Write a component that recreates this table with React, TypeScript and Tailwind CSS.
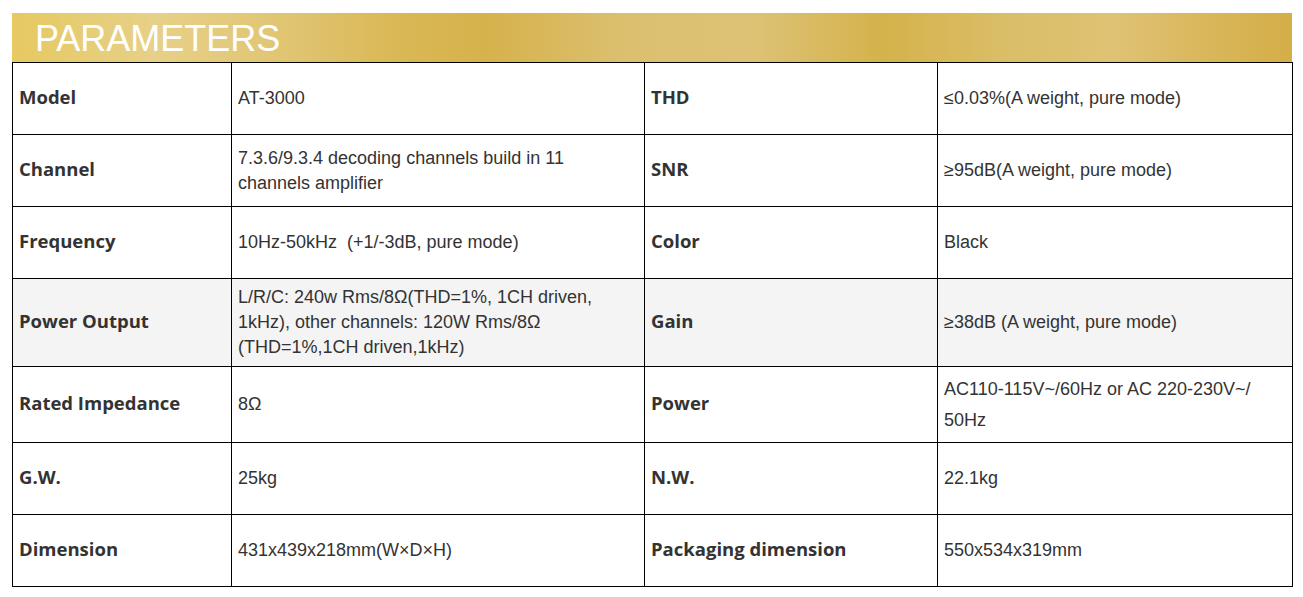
import React from "react";

interface Spec {
    label: string;
    value: React.ReactNode;
}

interface SpecRow {
    left: Spec;
    right: Spec;
    height: string;
    shaded?: boolean;
}

const rows: SpecRow[] = [
    {
        left: { label: "Model", value: "AT-3000" },
        right: { label: "THD", value: "≤0.03%(A weight, pure mode)" },
        height: "h-[72px]",
    },
    {
        left: {
            label: "Channel",
            value: "7.3.6/9.3.4 decoding channels build in 11 channels amplifier",
        },
        right: { label: "SNR", value: "≥95dB(A weight, pure mode)" },
        height: "h-[72px]",
    },
    {
        left: { label: "Frequency", value: "10Hz-50kHz\u00a0\u00a0(+1/-3dB, pure mode)" },
        right: { label: "Color", value: "Black" },
        height: "h-[72px]",
    },
    {
        left: {
            label: "Power Output",
            value: "L/R/C: 240w Rms/8Ω(THD=1%, 1CH driven, 1kHz), other channels: 120W Rms/8Ω (THD=1%,1CH driven,1kHz)",
        },
        right: { label: "Gain", value: "≥38dB (A weight, pure mode)" },
        height: "h-[88px]",
        shaded: true,
    },
    {
        left: { label: "Rated Impedance", value: "8Ω" },
        right: {
            label: "Power",
            value: (
                <span className="block leading-[31px]">
                    AC110-115V~/60Hz or AC 220-230V~/ 50Hz
                </span>
            ),
        },
        height: "h-[76px]",
    },
    {
        left: { label: "G.W.", value: "25kg" },
        right: { label: "N.W.", value: "22.1kg" },
        height: "h-[72px]",
    },
    {
        left: { label: "Dimension", value: "431x439x218mm(W×D×H)" },
        right: { label: "Packaging dimension", value: "550x534x319mm" },
        height: "h-[72px]",
    },
];

const labelCls =
    "border border-black px-[6px] pb-[3px] align-middle font-['Open_Sans',sans-serif] font-bold text-[18.5px] text-[#333]";
const valueCls =
    "border border-black px-[6px] align-middle font-['Liberation_Sans',Arial,sans-serif] text-[18px] leading-[25px] text-[#333]";

const App: React.FC = () => {
    return (
        <div className="min-h-[597px] w-[1303px] bg-white pt-[13px] pl-[12px]">
            {/* Title band */}
            <div
                className="
        flex h-[49px] w-[1280px] items-center pl-[23px]
        bg-[linear-gradient(90deg,#e6c961_0%,#e7d088_11%,#e0c471_22%,#d9b855_30%,#d6b24c_37%,#dcc070_48%,#ddc276_58%,#d4b24b_68%,#dbbe68_78%,#dfc274_86%,#d9b75c_93%,#d4ae47_100%)]
      "
            >
                <h1 className="pt-[2px] font-['Liberation_Sans',Arial,sans-serif] text-[36px] font-normal leading-none text-white">
                    PARAMETERS
                </h1>
            </div>

            {/* Spec table */}
            <table className="w-[1280px] table-fixed border-collapse">
                <colgroup>
                    <col className="w-[219px]" />
                    <col className="w-[413px]" />
                    <col className="w-[293px]" />
                    <col className="w-[355px]" />
                </colgroup>
                <tbody>
                    {rows.map((row) => (
                        <tr
                            key={row.left.label}
                            className={`${row.height} ${row.shaded ? "bg-[#f4f4f4]" : "bg-white"}`}
                        >
                            <td className={labelCls}>{row.left.label}</td>
                            <td className={valueCls}>{row.left.value}</td>
                            <td className={labelCls}>{row.right.label}</td>
                            <td className={valueCls}>{row.right.value}</td>
                        </tr>
                    ))}
                </tbody>
            </table>
        </div>
    );
};

export default App;
